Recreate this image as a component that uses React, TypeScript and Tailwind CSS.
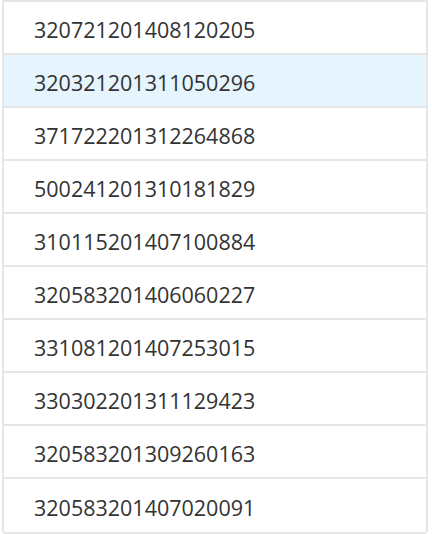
import React from 'react';

const ids = [
  '320721201408120205',
  '320321201311050296',
  '371722201312264868',
  '500241201310181829',
  '310115201407100884',
  '320583201406060227',
  '331081201407253015',
  '330302201311129423',
  '320583201309260163',
  '320583201407020091',
];

export default function App() {
  return (
    <div className="w-[432px] h-[534px] bg-white">
      <div className="ml-[2px] w-[426px] border-2 border-t-[2px] border-[#e6e6e6] rounded-b-[4px] overflow-hidden bg-white">
        {ids.map((id, i) => (
          <div
            key={id}
            className={`h-[53px] flex items-center pl-[30px] pt-[6px] text-[21.5px] text-[#333333] ${
              i < ids.length - 1 ? 'border-b-2 border-[#e6e6e6]' : ''
            } ${i === 1 ? 'bg-[#e5f4fd]' : 'bg-white'}`}
            style={{ fontFamily: '"Open Sans", "Noto Sans", sans-serif' }}
          >
            {id}
          </div>
        ))}
      </div>
    </div>
  );
}
